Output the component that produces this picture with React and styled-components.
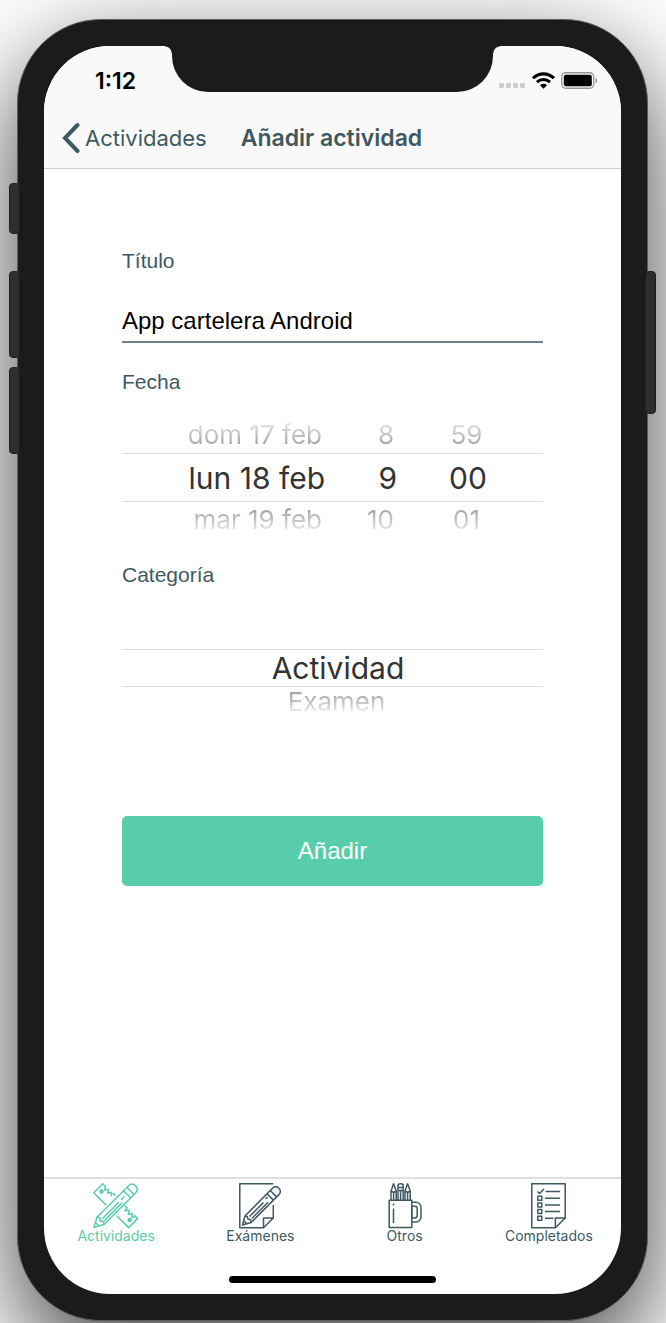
import React, { useState } from "react";
import styled, { createGlobalStyle, css } from "styled-components";

const sans = '"Liberation Sans", Arial, sans-serif';
const system = 'Inter, "Liberation Sans", sans-serif';
const slate = "#3f5961";
const mint = "#58cdaa";
const body = "#1b1b1b";
const bar = "#f9f9f9";

const GlobalStyle = createGlobalStyle`
  *, *::before, *::after { box-sizing: border-box; }
  body { margin: 0; background: #fff; }
`;

const Stage = styled.div`
  display: flex;
  min-height: 100vh;
  padding: 19px 18px 2px 17px;
  overflow: hidden;
  font-family: ${sans};
`;

const Phone = styled.div`
  position: relative;
  display: flex;
  flex: 1;
  padding: 26px;
  border: 1px solid #5c5c5c;
  border-radius: 84px;
  background: ${body};
  box-shadow: 0 36px 100px rgba(0, 0, 0, 0.76);
`;

const SideKey = styled.span`
  position: absolute;
  top: ${(p) => p.$top}px;
  ${(p) => p.$side}: -9px;
  width: 11px;
  height: ${(p) => p.$length}px;
  border: 1px solid #202020;
  border-radius: 4px;
  background: #2e2e2e;
`;

const Screen = styled.div`
  display: flex;
  flex: 1;
  flex-direction: column;
  min-width: 0;
  overflow: hidden;
  border-radius: 66px;
  background: #fff;
`;

const Header = styled.header`
  border-bottom: 1px solid #cfcfcf;
  background: ${bar};
`;

const StatusBar = styled.div`
  display: grid;
  grid-template-columns: 1fr 321px 1fr;
  height: 62px;
`;

const Clock = styled.time`
  padding: 22px 0 0 51px;
  font: 600 23px/26px ${system};
  color: #000;
`;

const Notch = styled.div`
  position: relative;
  height: 46px;
  border-radius: 0 0 36px 36px;
  background: ${body};

  &::before,
  &::after {
    content: "";
    position: absolute;
    top: 0;
    width: 7px;
    height: 7px;
  }
  &::before {
    right: 100%;
    background: radial-gradient(circle at 0 100%, transparent 6px, ${body} 7px);
  }
  &::after {
    left: 100%;
    background: radial-gradient(circle at 100% 100%, transparent 6px, ${body} 7px);
  }
`;

const Indicators = styled.div`
  display: flex;
  align-items: flex-start;
  gap: 6px;
  padding: 26px 0 0 6px;
`;

const NavBar = styled.div`
  display: flex;
  align-items: center;
  gap: 34px;
  height: 60px;
  padding-left: 18px;
`;

const BackButton = styled.button`
  display: flex;
  align-items: center;
  gap: 5px;
  padding: 0;
  border: 0;
  background: none;
  color: ${slate};
  font: 400 22px/28px ${system};
  cursor: pointer;
`;

const Title = styled.h1`
  margin: 0;
  color: ${slate};
  font: 600 23px/28px ${system};
`;

const Form = styled.form`
  display: flex;
  flex: 1;
  flex-direction: column;
  padding: 80px 78px 32px;
`;

const labelText = css`
  color: ${slate};
  font: 400 21px/24px ${sans};
`;

const Label = styled.label`
  ${labelText}
`;

const GroupLabel = styled.div`
  ${labelText}
`;

const TextInput = styled.input`
  width: 100%;
  height: 42px;
  margin: 28px 0 27px;
  padding: 0;
  border: 0;
  border-bottom: 2px solid #6f828a;
  border-radius: 0;
  outline: 0;
  background: none;
  color: #000;
  font: 400 24px/40px ${sans};
`;

const DateWheels = styled.div`
  display: grid;
  grid-template-columns: 203fr 73fr 145fr;
  margin: 23px 0 25px;
`;

const CategoryWheels = styled.div`
  display: grid;
  margin: 32px 0 99px;
`;

const Wheel = styled.ul`
  display: grid;
  grid-template-rows: ${(p) => p.$rows};
  margin: 0;
  padding: 0;
  list-style: none;
  text-align: ${(p) => p.$align};
`;

const fades = {
  above: "linear-gradient(#fff 5%, #d6d6d6 30%, #a8a8a8 75%)",
  below: "linear-gradient(#a8a8a8 25%, #dadada 68%, #fff 95%)",
};

const Option = styled.li`
  display: grid;
  align-items: center;
  padding: 0 ${(p) => p.$end}px 0 ${(p) => p.$start}px;
  white-space: nowrap;

  ${(p) =>
    p.$fade
      ? css`
          padding-right: ${p.$end + 3}px;
          background: ${fades[p.$fade]};
          background-clip: text;
          color: transparent;
          font: 400 26px/30px ${system};
        `
      : css`
          border: solid #dedede;
          border-width: 1px 0;
          color: #333;
          font: 400 30px/36px ${system};
        `}
`;

const Submit = styled.button`
  height: 70px;
  border: 0;
  border-radius: 5px;
  background: ${mint};
  color: #fff;
  font: 400 24px/28px ${sans};
  cursor: pointer;
`;

const TabBar = styled.nav`
  display: grid;
  grid-template-columns: repeat(4, 1fr);
  border-top: 2px solid #e0e0e0;
`;

const Tab = styled.a`
  display: flex;
  flex-direction: column;
  align-items: center;
  padding-top: 4px;
  color: ${(p) => (p.$active ? mint : slate)};
  font: 400 14px/14px ${system};
  text-decoration: none;

  svg {
    display: block;
    fill: none;
    stroke: currentColor;
  }
`;

const HomeArea = styled.div`
  display: flex;
  justify-content: center;
  padding: 33px 0 11px;
`;

const HomeIndicator = styled.span`
  width: 36%;
  height: 7px;
  border-radius: 4px;
  background: #000;
`;

function SignalIcon() {
  return (
    <svg width="27" height="16" viewBox="0 0 27 16" fill="#cacaca" aria-hidden="true">
      {[0, 7, 14, 21].map((x) => (
        <rect key={x} x={x} y="11" width="5" height="5" rx="1.5" />
      ))}
    </svg>
  );
}

function WifiIcon() {
  return (
    <svg width="23" height="17" viewBox="0 0 23 17" fill="none" stroke="#000" aria-hidden="true">
      <path d="M1 6.2C7 .3 16 .3 22 6.2" strokeWidth="3.200" />
      <path d="M5 10.2c3.8-3.6 9.2-3.6 13 0" strokeWidth="3" />
      <path d="M8 13.2c2-1.800 5-1.800 7 0l-3.500 3.500z" fill="#000" stroke="none" />
    </svg>
  );
}

function BatteryIcon() {
  return (
    <svg width="37" height="17" viewBox="0 0 37 17" aria-hidden="true">
      <rect x=".75" y=".75" width="32" height="15.5" rx="4" fill="none" stroke="#949494" strokeWidth="1.3" />
      <rect x="2.8" y="2.8" width="28" height="11.4" rx="2" fill="#000" />
      <path d="M34.5 5.8c2.2.8 2.2 4.6 0 5.4z" fill="#949494" />
    </svg>
  );
}

function BackIcon() {
  return (
    <svg width="18" height="32" viewBox="0 0 18 32" fill="none" aria-hidden="true">
      <path d="M15.5 3 3 16l12.500 13" stroke={slate} strokeWidth="4" strokeLinecap="round" />
    </svg>
  );
}

function RulerPencilIcon() {
  return (
    <svg width="46" height="46" viewBox="0 0 46 46" strokeWidth="1.500" strokeLinejoin="round" strokeLinecap="round" aria-hidden="true">
      <path d="M12.600 21.600.8 9.800 9.800.8l2.500 2.500M22 12.200l-1.800-1.800" />
      <path d="M12.300 3.300c1.200 1.200-1.600 2.600-.6 3.600s2.600-1.600 3.700-.5-1.600 2.600-.5 3.700 2.500-1.700 3.600-.6-1.200 2.300-.2 3.300" />
      <path d="M24.200 33.200 35.600 44.600l9-9-2.500-2.500M31.800 22.800l2 2" />
      <path d="M33.800 24.800c1.100 1.100-2.600 1.800-1.500 2.900s2.700-1.300 3.800-.2-1.700 2.600-.6 3.700 2.600-1.600 3.700-.5-1.400 2.600-.3 3.600 1.700-1.200 3.200-1.200" />
      <circle cx="8.500" cy="8.500" r="1.600" fill="currentColor" />
      <circle cx="36.700" cy="37" r="1.600" fill="currentColor" />
      <path d="M.8 44.500 4 34.300 35.600 2.700c2.200-2.200 4.900-1.900 6.900.1s2.500 4.800.3 7L11 41.500z" />
      <path d="m4 34.300 2.800.3.500 3.300 3.200.5.500 3.100M3 40l2.400 2.400M30.500 7.800l7 7M34 4.500l7 7M9.500 35.500l16-16M11.500 37.500 29 20M28.500 16.500l2.500-2.500" />
    </svg>
  );
}

function PagePencilIcon() {
  return (
    <svg width="42" height="46" viewBox="0 0 42 46" strokeWidth="1.500" strokeLinejoin="round" aria-hidden="true">
      <path d="M34.300.8H.8v44h23.700l9.800-9.800V22M34.300 35h-9.800v9.800" />
      <path d="M3.500 42 6 33 33.500 5.200c1.900-1.900 4.500-1.900 6.400 0s1.900 4.500 0 6.400L12.200 39.500z" />
      <path d="m6 33 2.300.5.600 2.600 2.700.6.600 2.800M5 38l2.600 2.600M28 10.700l6.400 6.400M31.200 7.500l6.400 6.400M10.500 33.500 24.500 19.500M12.800 35.500 29 19.300M26.500 16l2-2" />
    </svg>
  );
}

function MugIcon() {
  return (
    <svg width="34" height="46" viewBox="0 0 34 46" strokeWidth="1.500" strokeLinejoin="round" aria-hidden="true">
      <path d="M1.200 17.200h22.600v27.400H1.200z" />
      <path d="M23.800 19.300h4c3 0 5.200 2.200 5.200 5.200v9.300c0 3-2.200 5.200-5.200 5.200h-4" />
      <path d="M23.800 23.300h2.700c1.800 0 2.700 1 2.700 2.700v6.300c0 1.800-1 2.700-2.700 2.700h-2.700z" />
      <path d="M5.500 20.500v2M5.500 25.500V40" />
      <path d="M3 17V8L5.600.8 8.200 8v9M3 8l2.600 1.500L8.200 8M5.600 9.500V17" />
      <path d="M10 17V2.500c0-2.300 5.200-2.300 5.200 0V17M10 4.500h5.200M10 7.500h5.200M12.600 7.500V17" />
      <path d="M17 17V8L19.600.8 22.200 8v9M17 8l2.600 1.500L22.200 8M19.600 9.500V17" />
    </svg>
  );
}

function ChecklistIcon() {
  return (
    <svg width="35" height="46" viewBox="0 0 35 46" strokeWidth="1.500" strokeLinejoin="round" aria-hidden="true">
      <path d="M.8.8h33.400V35l-9.800 9.800H.8zM34.200 35h-9.800v9.800" />
      <path d="m6.500 8.500 2 2L13 6M14.500 8.500H29M14 15.200h15M14 21.900h15M14 28.500h15M14 35.200h8.500" />
      <path d="M6.800 13.300h4v4h-4zM6.800 20h4v4h-4zM6.800 26.600h4v4h-4zM6.800 33.200h4v4h-4z" />
    </svg>
  );
}

const dateColumns = [
  { name: "Día", align: "right", end: 0, values: ["dom 17 feb", "lun 18 feb", "mar 19 feb"] },
  { name: "Hora", align: "right", end: 1, values: ["8", "9", "10"] },
  { name: "Minutos", align: "center", end: 5, values: ["59", "00", "01"] },
];

const tabs = [
  { name: "Actividades", Icon: RulerPencilIcon, active: true },
  { name: "Exámenes", Icon: PagePencilIcon },
  { name: "Otros", Icon: MugIcon },
  { name: "Completados", Icon: ChecklistIcon },
];

export default function App() {
  const [title, setTitle] = useState("App cartelera Android");

  return (
    <Stage>
      <GlobalStyle />
      <Phone>
        <SideKey $side="left" $top={163} $length={51} />
        <SideKey $side="left" $top={251} $length={87} />
        <SideKey $side="left" $top={347} $length={87} />
        <SideKey $side="right" $top={251} $length={143} />
        <Screen>
          <Header>
            <StatusBar>
              <Clock>1:12</Clock>
              <Notch />
              <Indicators>
                <SignalIcon />
                <WifiIcon />
                <BatteryIcon />
              </Indicators>
            </StatusBar>
            <NavBar>
              <BackButton type="button">
                <BackIcon />
                Actividades
              </BackButton>
              <Title>Añadir actividad</Title>
            </NavBar>
          </Header>

          <Form onSubmit={(e) => e.preventDefault()}>
            <Label htmlFor="titulo">Título</Label>
            <TextInput id="titulo" value={title} onChange={(e) => setTitle(e.target.value)} />

            <GroupLabel id="fecha">Fecha</GroupLabel>
            <DateWheels role="group" aria-labelledby="fecha">
              {dateColumns.map(({ name, align, end, values }) => (
                <Wheel key={name} role="listbox" aria-label={name} $align={align} $rows="36px 49px 36px">
                  <Option role="option" aria-selected="false" $start={0} $end={end} $fade="above">{values[0]}</Option>
                  <Option role="option" aria-selected="true" $start={0} $end={end}>{values[1]}</Option>
                  <Option role="option" aria-selected="false" $start={0} $end={end} $fade="below">{values[2]}</Option>
                </Wheel>
              ))}
            </DateWheels>

            <GroupLabel id="categoria">Categoría</GroupLabel>
            <CategoryWheels>
              <Wheel role="listbox" aria-labelledby="categoria" $align="center" $rows="30px 38px 30px">
                <li role="presentation" />
                <Option role="option" aria-selected="true" $start={11} $end={0}>Actividad</Option>
                <Option role="option" aria-selected="false" $start={11} $end={0} $fade="below">Examen</Option>
              </Wheel>
            </CategoryWheels>

            <Submit type="submit">Añadir</Submit>
          </Form>

          <TabBar>
            {tabs.map(({ name, Icon, active }) => (
              <Tab key={name} href={`#${name.toLowerCase()}`} $active={active} aria-current={active ? "page" : undefined}>
                <Icon />
                {name}
              </Tab>
            ))}
          </TabBar>
          <HomeArea>
            <HomeIndicator />
          </HomeArea>
        </Screen>
      </Phone>
    </Stage>
  );
}
